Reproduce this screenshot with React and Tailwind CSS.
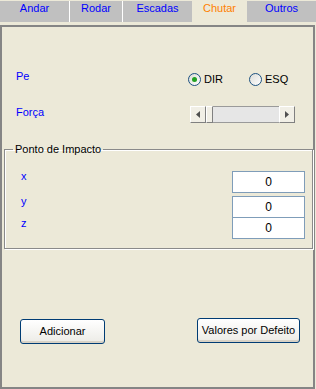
import React from "react";

const tabs = [
  { label: "Andar", w: "w-[70px]", sep: true },
  { label: "Rodar", w: "w-[53px]", sep: true },
  { label: "Escadas", w: "w-[69px]" },
  { label: "Chutar", w: "w-[55px]", active: true },
  { label: "Outros", w: "w-[69px]" },
];

function Radio({ checked, label }) {
  return (
    <div className="flex items-center">
      <div className="w-[13px] h-[13px] rounded-full border border-[#1C5180] bg-gradient-to-br from-[#DCDCD7] to-white flex items-center justify-center">
        {checked && <div className="w-[5px] h-[5px] rounded-full bg-[#21A121]" />}
      </div>
      <span className="ml-[3px] text-black">{label}</span>
    </div>
  );
}

function ScrollBtn({ dir }) {
  return (
    <div className="w-[16px] h-full bg-[#F1EFE6] border-t border-l border-white border-b border-r border-b-[#808080] border-r-[#808080] flex items-center justify-center">
      <svg width="4" height="7" viewBox="0 0 4 7">
        {dir === "left" ? (
          <polygon points="4,0 4,7 0,3.5" fill="#505050" />
        ) : (
          <polygon points="0,0 0,7 4,3.5" fill="#505050" />
        )}
      </svg>
    </div>
  );
}

function Field({ className = "" }) {
  return (
    <div className={`w-[73px] h-[22px] bg-white border border-[#7F9DB9] flex items-center justify-center text-black text-[12px] ${className}`}>
      0
    </div>
  );
}

export default function App() {
  return (
    <div className="w-[316px] h-[389px] bg-[#ECE9D8] overflow-hidden font-['Liberation_Sans',Arial,sans-serif] text-[11px] leading-[13px]">
      {/* Tabs */}
      <div className="flex h-[21px] mt-[1px]">
        {tabs.map((t) => (
          <div
            key={t.label}
            className={`${t.w} flex justify-center pt-[1px] ${
              t.active ? "text-[#FF8000]" : "bg-[#C0C0C0] text-[#0000FF]"
            } ${t.sep ? "border-r border-white" : ""}`}
          >
            {t.label}
          </div>
        ))}
      </div>

      {/* Panel */}
      <div className="mt-[3px] w-[315px] h-[364px] border-2 border-[#858585]">
        {/* Pe */}
        <div className="flex items-start mt-[43px]">
          <div className="pl-[14px] w-[186px] text-[#0000FF]">Pe</div>
          <div className="flex mt-[3px]">
            <div className="w-[61px]">
              <Radio checked label="DIR" />
            </div>
            <Radio label="ESQ" />
          </div>
        </div>

        {/* Forca */}
        <div className="flex items-start mt-[20px]">
          <div className="pl-[14px] w-[188px] text-[#0000FF]">Força</div>
          <div className="flex w-[105px] h-[17px]">
            <ScrollBtn dir="left" />
            <div className="w-[7px] h-full bg-[#F1EFE6] border-t border-l border-white border-b border-r border-b-[#808080] border-r-[#808080]" />
            <div className="flex-1 h-full bg-[#E6E6E6] border-t border-b border-[#9A9A9A]" />
            <ScrollBtn dir="right" />
          </div>
        </div>

        {/* Ponto de Impacto */}
        <fieldset className="ml-[2px] mt-[20px] w-[309px] border border-[#8A8A8A] shadow-[inset_1px_1px_0_#fff,1px_1px_0_#fff] pb-[9px]">
          <legend className="ml-[8px] px-[2px] text-black">Ponto de Impacto</legend>
          <div className="flex">
            <div className="pl-[16px] flex flex-col text-[#0000FF]">
              <div className="mt-[14px]">x</div>
              <div className="mt-[12px]">y</div>
              <div className="mt-[9px]">z</div>
            </div>
            <div className="ml-auto mr-[7px] flex flex-col mt-[15px]">
              <Field />
              <Field className="mt-[3px]" />
              <Field className="-mt-[1px]" />
            </div>
          </div>
        </fieldset>

        {/* Buttons */}
        <div className="flex items-start justify-between mt-[69px] pl-[18px] pr-[13px]">
          <button className="mt-[1px] w-[85px] h-[25px] rounded-[3px] border border-[#003C74] bg-gradient-to-b from-white to-[#ECEBE6] shadow-[inset_0_-2px_0_#D8D2C6] text-black">
            Adicionar
          </button>
          <button className="w-[103px] h-[25px] rounded-[3px] border border-[#003C74] bg-gradient-to-b from-white to-[#ECEBE6] shadow-[inset_0_-2px_0_#D8D2C6] text-black">
            Valores por Defeito
          </button>
        </div>
      </div>
    </div>
  );
}
